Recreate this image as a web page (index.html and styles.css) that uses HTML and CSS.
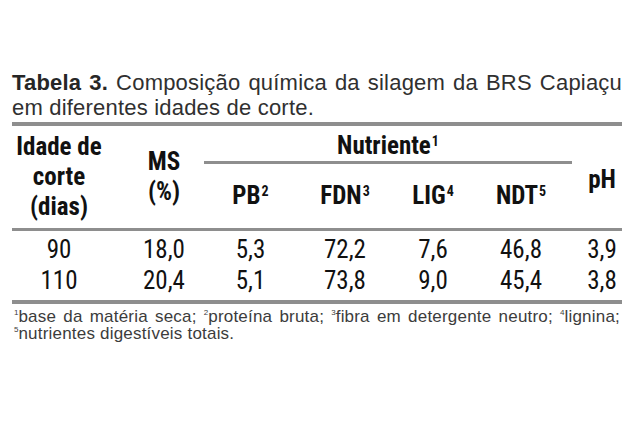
FILE: index.html
```html
<!DOCTYPE html>
<html lang="pt">
<head>
<meta charset="utf-8">
<title>Tabela 3</title>
<link rel="stylesheet" href="styles.css">
</head>
<body>
<div class="fig">
  <p class="caption"><b>Tabela 3.</b> Composição química da silagem da BRS Capiaçu em diferentes idades de corte.</p>
  <table class="tab">
    <colgroup>
      <col class="w1"><col class="w2"><col class="w3"><col class="w4"><col class="w5"><col class="w6"><col class="w7">
    </colgroup>
    <thead>
      <tr>
        <th rowspan="2" class="span k1">Idade de<br>corte<br>(dias)</th>
        <th rowspan="2" class="span k2">MS<br>(%)</th>
        <th colspan="4" class="nut">Nutriente<sup>1</sup></th>
        <th rowspan="2" class="span ph k7">pH</th>
      </tr>
      <tr>
        <th class="sub">PB<sup>2</sup></th>
        <th class="sub k4">FDN<sup>3</sup></th>
        <th class="sub">LIG<sup>4</sup></th>
        <th class="sub k6">NDT<sup>5</sup></th>
      </tr>
    </thead>
    <tbody>
      <tr class="first">
        <td class="k1">90</td><td class="k2">18,0</td><td>5,3</td><td class="k4">72,2</td><td>7,6</td><td class="k6">46,8</td><td class="k7">3,9</td>
      </tr>
      <tr class="last">
        <td class="k1">110</td><td class="k2">20,4</td><td>5,1</td><td class="k4">73,8</td><td>9,0</td><td class="k6">45,4</td><td class="k7">3,8</td>
      </tr>
    </tbody>
  </table>
  <p class="notes"><sup>1</sup>base da matéria seca; <sup>2</sup>proteína bruta; <sup>3</sup>fibra em detergente neutro; <sup>4</sup>lignina; <sup>5</sup>nutrientes digestíveis totais.</p>
</div>
</body>
</html>
```
FILE: styles.css
```css
html, body {
  margin: 0;
  padding: 0;
  background: #ffffff;
}

.fig {
  width: 610px;
  padding: 70px 0 0 12px;
}

.caption {
  margin: 0;
  font-family: "Liberation Sans", Arial, sans-serif;
  font-size: 22px;
  line-height: 25px;
  letter-spacing: 0.2px;
  color: #303030;
  text-align: justify;
}

.caption b {
  font-weight: bold;
  color: #262626;
}

.tab {
  margin-top: 2px;
  width: 610px;
  table-layout: fixed;
  border-collapse: separate;
  border-spacing: 0;
  border-top: 4px solid #8e8e8e;
  border-bottom: 4px solid #8e8e8e;
  font-family: "Roboto Condensed", "Liberation Sans Narrow", sans-serif;
  color: #111111;
}

.w1 { width: 100px; }
.w2 { width: 92px; }
.w3 { width: 93px; }
.w4 { width: 92px; }
.w5 { width: 88px; }
.w6 { width: 95px; }
.w7 { width: 50px; }

.tab th {
  font-size: 25px;
  font-weight: bold;
  line-height: 30px;
  text-align: center;
  padding-top: 0;
  padding-bottom: 0;
  padding-left: 0;
  padding-right: 0;
  vertical-align: middle;
  white-space: nowrap;
}

.tab th.span,
.tab th.sub {
  border-bottom: 3px solid #8e8e8e;
}

.tab th.sub {
  padding-top: 17px;
  padding-bottom: 17px;
}

.tab th.nut {
  padding-top: 5px;
  border-bottom: 3px solid #8e8e8e;
}

.tab th.ph {
  padding-top: 5px;
}

.tab th sup {
  font-size: 14px;
  line-height: 0;
  vertical-align: 8px;
  margin-left: 1px;
}

.tab td {
  font-size: 25px;
  font-weight: normal;
  line-height: 31px;
  text-align: center;
  padding-top: 0;
  padding-bottom: 0;
  padding-left: 0;
  padding-right: 0;
  white-space: nowrap;
}

.tab tr.first td { padding-top: 3px; }
.tab tr.last td { padding-bottom: 4px; }

.tab .k1 { padding-right: 6px; }
.tab .k2 { padding-left: 12px; }
.tab .k4 { padding-left: 4px; }
.tab .k6 { padding-right: 7px; }
.tab .k7 { padding-left: 10px; }

.notes {
  margin: 4px 0 0 2px;
  width: 606px;
  font-family: "Liberation Sans", Arial, sans-serif;
  font-size: 17px;
  line-height: 17px;
  letter-spacing: 0.2px;
  color: #3c3c3c;
  text-align: justify;
}

.notes sup {
  font-size: 8px;
  line-height: 0;
  vertical-align: 7px;
  letter-spacing: 0;
}
```
